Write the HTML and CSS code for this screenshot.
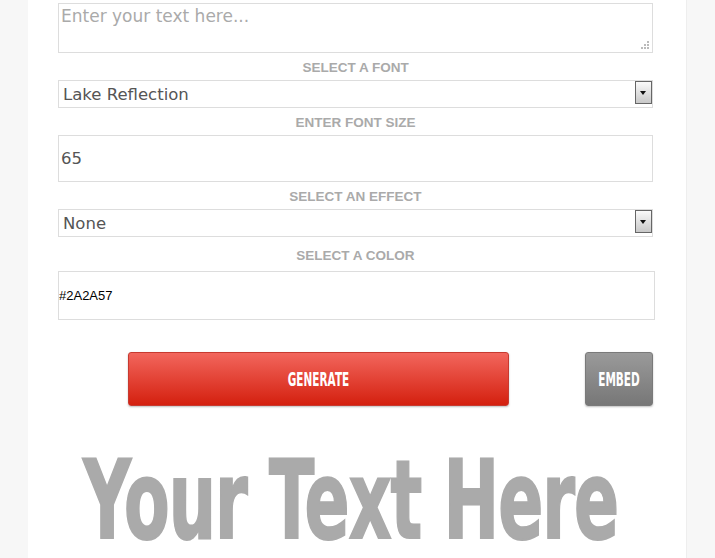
FILE: index.html
```html
<html>
	<head>
		<title>Text Generator</title>
		<link rel="stylesheet" href="styles.css">
	</head>
	<body>
		<div class="panel">
			<div class="form">
				<div class="text-wrap">
					<textarea class="text" placeholder="Enter your text here..."></textarea>
					<svg class="grip" width="9" height="9" viewBox="0 0 9 9">
						<rect x="7" y="0" width="2" height="2" fill="#bbb"/>
						<rect x="4" y="3" width="2" height="2" fill="#bbb"/>
						<rect x="7" y="3" width="2" height="2" fill="#bbb"/>
						<rect x="1" y="6" width="2" height="2" fill="#bbb"/>
						<rect x="4" y="6" width="2" height="2" fill="#bbb"/>
						<rect x="7" y="6" width="2" height="2" fill="#bbb"/>
					</svg>
				</div>

				<label class="caption">Select a font</label>
				<div class="select-wrap">
					<select class="select">
						<option>Lake Reflection</option>
					</select>
					<span class="arrow"></span>
				</div>

				<label class="caption">Enter font size</label>
				<input class="field size" type="text" value="65">

				<label class="caption">Select an effect</label>
				<div class="select-wrap">
					<select class="select">
						<option>None</option>
					</select>
					<span class="arrow"></span>
				</div>

				<label class="caption tall">Select a color</label>
				<input class="field color" type="text" value="#2A2A57">

				<div class="buttons">
					<button class="btn generate"><span class="stretch">GENERATE</span></button>
					<button class="btn embed"><span class="stretch">EMBED</span></button>
				</div>
			</div>

			<div class="preview">
				<span class="preview-text">Your Text Here</span>
			</div>
		</div>
	</body>
</html>
```

FILE: styles.css
```css
body {
	margin: 0;
	background-color: #f7f7f7;
	font-family: "DejaVu Sans", Verdana, sans-serif;
}

.panel {
	margin-left: 28px;
	width: 659px;
	min-height: 558px;
	background-color: #fff;
	border-right: 1px solid #eee;
	padding-top: 3px;
	box-sizing: border-box;
}

.form {
	margin-left: 30px;
	width: 597px;
	display: flex;
	flex-direction: column;
}

.text-wrap, .select-wrap {
	position: relative;
	width: 595px;
}

.text {
	display: block;
	width: 595px;
	height: 50px;
	box-sizing: border-box;
	border: 1px solid #ddd;
	padding: 2px 2px;
	font-family: "DejaVu Sans", Verdana, sans-serif;
	font-size: 17px;
	color: #555;
	resize: none;
	outline: none;
}

.text::placeholder {
	color: #aaa;
}

.grip {
	position: absolute;
	right: 4px;
	bottom: 3px;
}

.caption {
	display: block;
	text-align: center;
	font-family: "Liberation Sans", Arial, sans-serif;
	font-weight: bold;
	font-size: 13.5px;
	padding-top: 3px;
	line-height: 24px;
	text-transform: uppercase;
	color: #aaa;
	width: 595px;
}

.caption.tall {
	line-height: 31px;
}

.select {
	display: block;
	width: 595px;
	height: 28px;
	box-sizing: border-box;
	border: 1px solid #ddd;
	border-radius: 0;
	padding: 0 0 0 4px;
	background-color: #fff;
	font-family: "DejaVu Sans", Verdana, sans-serif;
	font-size: 16.5px;
	color: #555;
	-webkit-appearance: none;
	appearance: none;
	outline: none;
}

.arrow {
	position: absolute;
	right: 1px;
	top: 1px;
	width: 17px;
	height: 23px;
	box-sizing: border-box;
	border: 1px solid #666;
	background: linear-gradient(#fafafa, #c8c8c8);
}

.arrow::after {
	content: "";
	position: absolute;
	left: 4px;
	top: 9px;
	border-left: 3.5px solid transparent;
	border-right: 3.5px solid transparent;
	border-top: 4px solid #111;
}

.field {
	display: block;
	box-sizing: border-box;
	border: 1px solid #ddd;
	background-color: #fff;
	outline: none;
}

.size {
	width: 595px;
	height: 47px;
	padding: 0 2px;
	font-family: "DejaVu Sans", Verdana, sans-serif;
	font-size: 16.5px;
	color: #555;
}

.color {
	width: 597px;
	height: 49px;
	padding: 0;
	font-family: "Liberation Sans", Arial, sans-serif;
	font-size: 13px;
	color: #000;
}

.buttons {
	display: flex;
	margin-top: 32px;
	width: 595px;
}

.btn {
	height: 54px;
	border-radius: 3px;
	color: #fff;
	font-family: "DejaVu Sans", Verdana, sans-serif;
	font-weight: bold;
	font-size: 10.5px;
	padding: 0;
	cursor: pointer;
	box-shadow: 0 1px 2px rgba(0, 0, 0, 0.25);
}

.generate {
	margin-left: 70px;
	width: 381px;
	border: 1px solid #c73a30;
	background: linear-gradient(#f2665d, #d4200f);
}

.embed {
	margin-left: auto;
	width: 68px;
	border: 1px solid #7a7a7a;
	background: linear-gradient(#9a9a9a, #777);
}

.stretch {
	display: inline-block;
	transform: scaleY(1.8);
}

.preview {
	padding: 49px 0 0 55px;
	white-space: nowrap;
}

.preview-text {
	display: inline-block;
	font-family: "DejaVu Sans", Verdana, sans-serif;
	font-weight: bold;
	font-size: 66.5px;
	line-height: 56px;
	letter-spacing: -1px;
	color: #aaa;
	-webkit-text-stroke: 1.2px #aaa;
	transform: scaleY(1.634);
	transform-origin: left top;
}
```
